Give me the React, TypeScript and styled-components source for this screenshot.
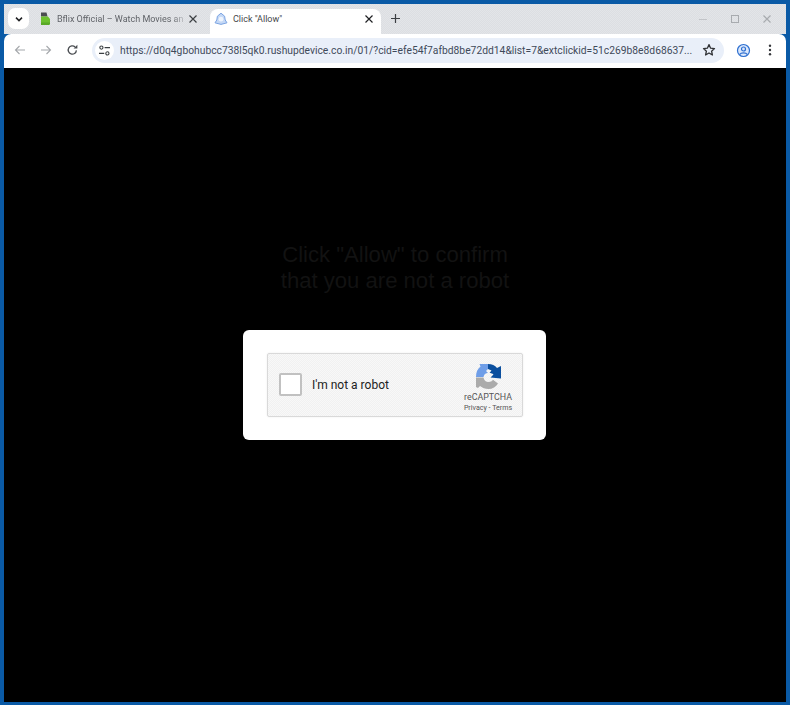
import React from "react";
import styled, { createGlobalStyle } from "styled-components";

const GlobalStyle = createGlobalStyle`
  html, body {
    margin: 0;
    padding: 0;
    height: 705px;
    overflow: hidden;
    background-color: #0a5aa6;
  }
  #root {
    height: 705px;
  }
`;

const Desktop = styled.div`
  height: 705px;
  box-sizing: border-box;
  padding: 4px 4px 3px 4px;
  background-color: #0a5aa6;
`;

const Window = styled.div`
  height: 100%;
  display: flex;
  flex-direction: column;
  font-family: "Roboto", "Liberation Sans", sans-serif;
`;

const TabStrip = styled.div`
  height: 30px;
  flex: none;
  display: flex;
  align-items: flex-end;
  padding-left: 4px;
  background: repeating-conic-gradient(#dcdee2 0 25%, #e3e5e8 0 50%) 0 0 / 2px 2px;
`;

const TabSearch = styled.button`
  width: 21px;
  height: 21px;
  margin: 0 7px 5px 0;
  padding: 0;
  border: none;
  border-radius: 7px;
  background-color: #fff;
  display: flex;
  align-items: center;
  justify-content: center;
`;

const Tab = styled.div<{ $active?: boolean }>`
  height: ${p => (p.$active ? "25px" : "30px")};
  width: ${p => (p.$active ? "171px" : "174px")};
  flex: none;
  box-sizing: border-box;
  display: flex;
  align-items: center;
  padding: ${p => (p.$active ? "0 7px 5px 4px" : "0 12px 1px 4px")};
  border-radius: 8px 8px 0 0;
  background-color: ${p => (p.$active ? "#fff" : "transparent")};
`;

const TabTitle = styled.span<{ $active?: boolean }>`
  flex: 1;
  margin-left: ${p => (p.$active ? "5px" : "6px")};
  font-size: 9px;
  line-height: 12px;
  white-space: nowrap;
  color: ${p => (p.$active ? "#45474a" : "#606368")};
  mask-image: ${p => (p.$active ? "none" : "linear-gradient(to right, #000 88%, transparent)")};
`;

const NewTab = styled.div`
  width: 28px;
  height: 30px;
  flex: none;
  display: flex;
  align-items: center;
  justify-content: center;
  padding-bottom: 1px;
  box-sizing: border-box;
`;

const WindowControls = styled.div`
  margin-left: auto;
  height: 30px;
  display: flex;
  align-items: center;
  gap: 16px;
  padding-right: 11px;
  padding-bottom: 1px;
  box-sizing: border-box;
`;

const ControlSlot = styled.div`
  width: 16px;
  height: 16px;
  display: flex;
  align-items: center;
  justify-content: center;
`;

const Toolbar = styled.div`
  height: 34px;
  flex: none;
  display: flex;
  align-items: center;
  box-sizing: border-box;
  padding: 0 8px 2px 8px;
  background-color: #fff;
  border-radius: 7px 7px 0 0;
`;

const NavButton = styled.div`
  width: 16px;
  height: 16px;
  margin-right: 10px;
  flex: none;
  display: flex;
  align-items: center;
  justify-content: center;
`;

const AddressBar = styled.div`
  width: 632px;
  height: 25px;
  margin-left: 2px;
  flex: none;
  box-sizing: border-box;
  display: flex;
  align-items: center;
  padding: 0 8px 0 3px;
  border-radius: 13px;
  background-color: #e9eff9;
`;

const SiteInfo = styled.div`
  width: 19px;
  height: 19px;
  flex: none;
  border-radius: 50%;
  background-color: #fff;
  display: flex;
  align-items: center;
  justify-content: center;
`;

const Url = styled.span`
  flex: 1;
  margin: 1px 0 0 6px;
  font-size: 10.3px;
  line-height: 14px;
  white-space: nowrap;
  color: #3f4a5a;
`;

const ProfileSlot = styled.div`
  width: 16px;
  height: 16px;
  margin-left: 11px;
  flex: none;
  display: flex;
  align-items: center;
  justify-content: center;
`;

const MenuSlot = styled(ProfileSlot)`
  margin-left: 11px;
`;

const Page = styled.main`
  flex: 1;
  display: flex;
  flex-direction: column;
  align-items: center;
  padding-top: 174px;
  background-color: #000;
`;

const Heading = styled.h1`
  margin: 0;
  width: 300px;
  font-family: "Liberation Sans", Arial, sans-serif;
  font-size: 22.1px;
  font-weight: 400;
  line-height: 26px;
  text-align: center;
  color: #121212;
`;

const Card = styled.section`
  width: 303px;
  height: 110px;
  margin: 36px 1px 0 0;
  box-sizing: border-box;
  padding: 23px 23px 0 24px;
  border-radius: 6px;
  background-color: #fff;
`;

const Captcha = styled.div`
  width: 256px;
  height: 64px;
  box-sizing: border-box;
  display: flex;
  align-items: center;
  padding: 0 8px 0 11px;
  border: 1px solid #d9d9d9;
  border-radius: 2px;
  background: repeating-conic-gradient(#f1f1f1 0 25%, #f8f8f8 0 50%) 0 0 / 2px 2px;
  box-shadow: 0 0 2px rgba(0, 0, 0, 0.08);
`;

const Checkbox = styled.div`
  width: 23px;
  height: 23px;
  margin-bottom: 2px;
  flex: none;
  box-sizing: border-box;
  border: 2px solid #c1c1c1;
  border-radius: 2px;
  background-color: #fff;
`;

const CaptchaLabel = styled.span`
  flex: 1;
  margin-left: 10px;
  font-size: 12px;
  color: #222;
`;

const Badge = styled.div`
  width: 52px;
  display: flex;
  flex-direction: column;
  align-items: center;
  margin-top: 4px;
`;

const BadgeTitle = styled.span`
  margin-top: 1px;
  font-size: 8.9px;
  line-height: 11px;
  color: #555;
`;

const BadgeLinks = styled.span`
  font-size: 7.1px;
  line-height: 9px;
  white-space: nowrap;
  color: #555;
`;

const Chevron = () => (
  <svg width="10" height="10" viewBox="0 0 10 10">
    <path d="M2 3.6 5 6.6 8 3.6" fill="none" stroke="#202124" strokeWidth="1.5" />
  </svg>
);

const CloseIcon = ({ color = "#3c3f43" }: { color?: string }) => (
  <svg width="10" height="10" viewBox="0 0 10 10" style={{ flex: "none" }}>
    <path d="M1.5 1.5 8.5 8.5M8.5 1.5 1.5 8.5" fill="none" stroke={color} strokeWidth="1.2" />
  </svg>
);

const BflixIcon = () => (
  <svg width="11" height="14" viewBox="0 0 11 14" style={{ flex: "none" }}>
    <path d="M1 0.5H6.5L7.5 4.5H1Z" fill="#4a4c50" />
    <path d="M1 4.5H8L10 7V12L9 13H1Z" fill="#6cc02e" />
    <path d="M1 10.5H10V12L9 13H1Z" fill="#4f9a22" opacity="0.6" />
  </svg>
);

const BellIcon = () => (
  <svg width="14" height="14" viewBox="0 0 14 14" style={{ flex: "none" }}>
    <path
      d="M7 1.2 10.6 4.2 11.2 8 13 10.8 7 12.4 1 10.8 2.8 8 3.4 4.2Z"
      fill="#c4d8f6"
      stroke="#7ba4e2"
      strokeWidth="1"
      strokeLinejoin="round"
    />
    <circle cx="7" cy="7.2" r="2.4" fill="#eef4fd" />
  </svg>
);

const Arrow = ({ flip }: { flip?: boolean }) => (
  <svg width="14" height="14" viewBox="0 0 14 14" style={flip ? { transform: "scaleX(-1)" } : undefined}>
    <path d="M12 7H2.5M6.5 3 2.5 7 6.5 11" fill="none" stroke="#a4a7ab" strokeWidth="1.1" />
  </svg>
);

const ReloadIcon = () => (
  <svg width="14" height="14" viewBox="0 0 14 14">
    <path d="M11.4 7.4A4.1 4.1 0 1 1 10.1 4" fill="none" stroke="#4a4d51" strokeWidth="1.3" />
    <path d="M8.6 5.4H12.4V1.7Z" fill="#4a4d51" />
  </svg>
);

const TuneIcon = () => (
  <svg width="13" height="13" viewBox="0 0 13 13">
    <circle cx="3.4" cy="3.6" r="1.6" fill="none" stroke="#3c4043" strokeWidth="1.1" />
    <path d="M6.6 3.6H12M1 9.4H6.2" stroke="#3c4043" strokeWidth="1.2" />
    <circle cx="9.4" cy="9.4" r="1.6" fill="none" stroke="#3c4043" strokeWidth="1.1" />
  </svg>
);

const StarIcon = () => (
  <svg width="14" height="14" viewBox="0 0 14 14">
    <path
      d="M7 1.6 8.6 5.2 12.5 5.6 9.6 8.2 10.4 12 7 10 3.6 12 4.4 8.2 1.5 5.6 5.4 5.2Z"
      fill="none"
      stroke="#303236"
      strokeWidth="1.3"
      strokeLinejoin="round"
    />
  </svg>
);

const ProfileIcon = () => (
  <svg width="15" height="15" viewBox="0 0 15 15">
    <circle cx="7.5" cy="7.5" r="6" fill="#dce8fb" stroke="#2d6fd0" strokeWidth="1.2" />
    <circle cx="7.5" cy="6" r="2" fill="none" stroke="#2d6fd0" strokeWidth="1.2" />
    <path d="M3.8 11.4C5 9.4 10 9.4 11.2 11.4" fill="none" stroke="#2d6fd0" strokeWidth="1.2" />
  </svg>
);

const DotsIcon = () => (
  <svg width="14" height="14" viewBox="0 0 14 14">
    <circle cx="7" cy="2.8" r="1.2" fill="#35373b" />
    <circle cx="7" cy="7" r="1.2" fill="#35373b" />
    <circle cx="7" cy="11.2" r="1.2" fill="#35373b" />
  </svg>
);

const RecaptchaLogo = () => (
  <svg width="28" height="28" viewBox="0 0 28 28">
    <path d="M2 14C2 9 3.5 6 6.5 3.5L5.5 1H14V6L12 8 14 10C11.5 10 10 11.5 9.5 14Z" fill="#6f9ee8" />
    <path d="M14 1C18 1 21 2.5 23 5L27 3V15.5L16.5 14.5 19.5 11.5C18.5 10.5 17 10 15.5 10L17.5 7.5 14 6Z" fill="#0b4f9e" />
    <path d="M2 14.5H9.5C10 17.5 12 19 14.5 19C16.5 19 18 18.2 19 16.8L24 20.5C22 24 18.5 26 14.5 26C11 26 8.5 25 6 23L4 25 2 24Z" fill="#ababab" />
  </svg>
);

const App: React.FC = () => (
  <>
    <GlobalStyle />
    <Desktop>
      <Window>
        <TabStrip>
          <TabSearch aria-label="Search tabs">
            <Chevron />
          </TabSearch>
          <Tab>
            <BflixIcon />
            <TabTitle>Bflix Official – Watch Movies an</TabTitle>
            <CloseIcon />
          </Tab>
          <Tab $active>
            <BellIcon />
            <TabTitle $active>Click "Allow"</TabTitle>
            <CloseIcon color="#202124" />
          </Tab>
          <NewTab>
            <svg width="11" height="11" viewBox="0 0 11 11">
              <path d="M5.5 1V10M1 5.5H10" stroke="#3c3f43" strokeWidth="1.2" />
            </svg>
          </NewTab>
          <WindowControls>
            <ControlSlot>
              <svg width="10" height="10" viewBox="0 0 10 10">
                <path d="M1 5.5H9" stroke="#c2c4c8" strokeWidth="1" />
              </svg>
            </ControlSlot>
            <ControlSlot>
              <svg width="10" height="10" viewBox="0 0 10 10">
                <rect x="1.5" y="1.5" width="7" height="7" fill="none" stroke="#a8abaf" strokeWidth="1" />
              </svg>
            </ControlSlot>
            <ControlSlot>
              <CloseIcon color="#a8abaf" />
            </ControlSlot>
          </WindowControls>
        </TabStrip>
        <Toolbar>
          <NavButton>
            <Arrow />
          </NavButton>
          <NavButton>
            <Arrow flip />
          </NavButton>
          <NavButton>
            <ReloadIcon />
          </NavButton>
          <AddressBar>
            <SiteInfo>
              <TuneIcon />
            </SiteInfo>
            <Url>https://d0q4gbohubcc738l5qk0.rushupdevice.co.in/01/?cid=efe54f7afbd8be72dd14&amp;list=7&amp;extclickid=51c269b8e8d68637...</Url>
            <StarIcon />
          </AddressBar>
          <ProfileSlot>
            <ProfileIcon />
          </ProfileSlot>
          <MenuSlot>
            <DotsIcon />
          </MenuSlot>
        </Toolbar>
        <Page>
          <Heading>
            Click "Allow" to confirm
            <br />
            that you are not a robot
          </Heading>
          <Card>
            <Captcha>
              <Checkbox />
              <CaptchaLabel>I'm not a robot</CaptchaLabel>
              <Badge>
                <RecaptchaLogo />
                <BadgeTitle>reCAPTCHA</BadgeTitle>
                <BadgeLinks>Privacy - Terms</BadgeLinks>
              </Badge>
            </Captcha>
          </Card>
        </Page>
      </Window>
    </Desktop>
  </>
);

export default App;
